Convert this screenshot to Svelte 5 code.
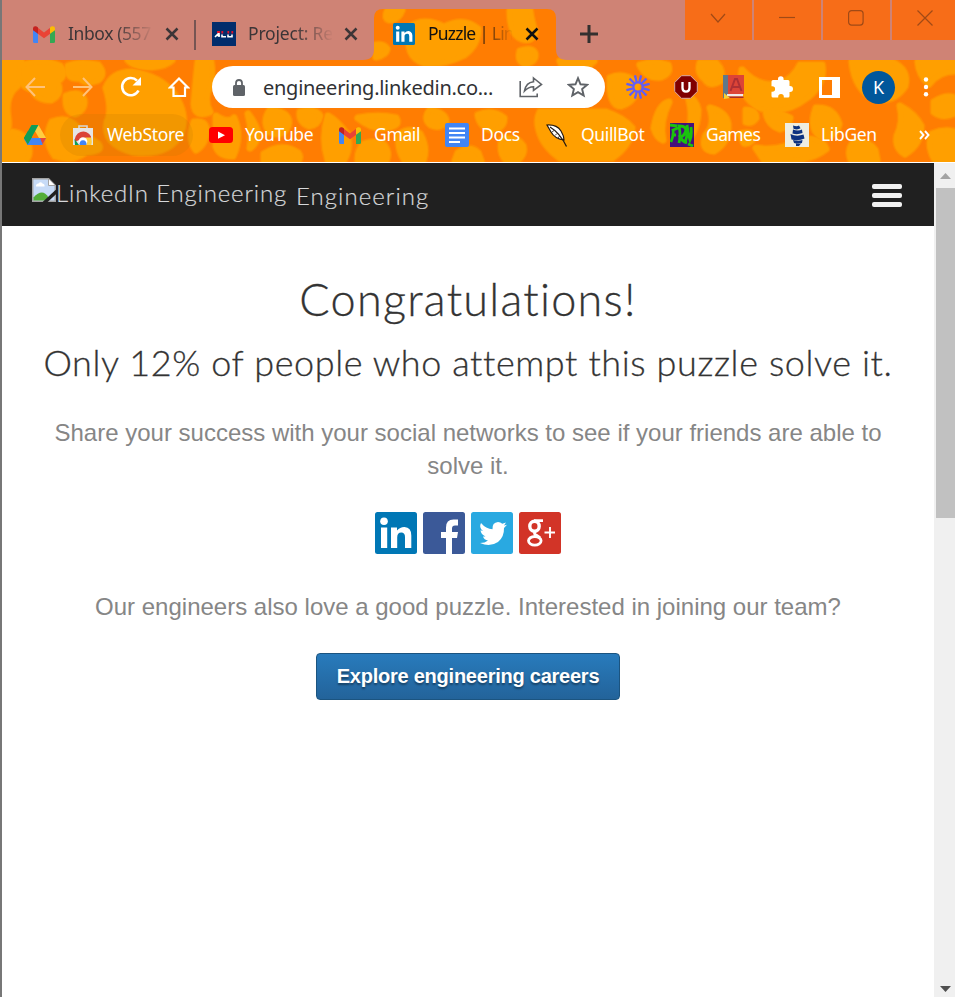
<script>
  const blobs = [
    'M2 62h20q4 18-9 28q-8 10-5 28q2 16-6 28z',
    'M20 66q22-8 40 0q8 8-3 16q6 12-6 18q-14 0-18-10q-18-6-13-24z',
    'M68 66q12-5 30-1q8 9 0 15q-12 5-18-2q-14 2-12-12z',
    'M66 96q14-6 18 4q1 10-9 14q-10-2-9-18z',
    'M52 122q14-6 24 4q12 12 22 18q6 7-12 8q-14 10-31 4q-12-16-3-34z',
    'M12 132q13 2 16 12q3 10-2 16h-22q-2-16 8-28z',
    'M106 88q6-16 26-16q28 4 42 22q14 20 7 38q-10 24-48 20q-30-8-26-30q6-12-1-34z',
    'M128 60h44q-6 6-20 7q-18 0-24-7z',
    'M198 62h13q2 14-1 24q-7 14 0 26q-15 6-16-8q2-24 4-42z',
    'M194 122q12-2 12 8q0 14-10 20q-8-10-2-28z',
    'M216 116q12 8 18 2q8 18-1 38q-14 0-17-10z',
    'M248 114q5 18 2 34q6-4 8-14q-2-10-10-20z',
    'M270 110q22 2 18 16q-6 12-18 6q-8-10 0-22z',
    'M300 112q16-4 20 4q-2 9-11 10q-10-4-9-14z',
    'M264 154q18-12 34-1q3 4 0 8h-34z',
    'M328 116q8 4 19 18q4 14-3 26h-16q-7-22 0-44z',
    'M358 118q20-4 38 0q4 7-6 9q-16 4-32-9z',
    'M364 144q12-4 20 1q6 8 2 16h-28q-1-10 6-17z',
    'M400 134q10-7 20 0q8 14 3 27h-18q-9-14-5-27z',
    'M410 27q14-10 34 0q20-10 34 2q0 16-14 26q-20 10-40 8q-20-6-14-36z',
    'M388 10h14q-3 8-10 10q-9 0-4-10z',
    'M510 11h20q1 9 5 21q-3 10-13 7q-12-4-12-28z',
    'M376 45q8-1 11 4q-1 6-11 8z',
    'M520 51q13-4 15 3q1 7-9 10q-9-2-6-13z',
    'M560 61h34q-10 10-22 10q-10-3-12-10z',
    'M430 110q16 3 16 12q-6 7-15 3q-8-6-1-15z',
    'M458 153q12-8 20 0l3 8h-26z',
    'M478 115q14-6 26 3q0 10-12 12q-12-3-14-15z',
    'M502 140q14-5 21 6q2 8-5 14h-12q-7-8-4-20z',
    'M540 112h66q18 6 26 16q-2 18-20 30h-52q-17-12-21-28q-3-10 1-18z',
    'M610 78q14-6 27 5q0 18-16 23q-12 0-11-28z',
    'M640 65q14-5 28 0q3 8-7 12q-14 2-21-12z',
    'M654 128q4-23 15-26q-10 20-6 38q-6-2-9-12z',
    'M688 96q7 22-2 46q12-13 12-32q-2-10-10-14z',
    'M700 63h16q8 8 4 18q-10 6-15-2q-8-6-5-16z',
    'M710 108q16 4 18 16q1 18-14 27q-14-1-8-16q10-10 4-27z',
    'M742 70q16 18 38 14q14-6 20-19h22q3 18-14 32q-26 20-50 10q-20-12-16-37z',
    'M746 110q10 0 10 8q-4 6-10 4z',
    'M766 112q14 0 24 6q-1 9-10 11q-12-4-14-17z',
    'M740 134q12-3 14 3q-3 7-10 6z',
    'M756 148q24 4 48-9q18-1 22 10q-14 11-36 11h-26z',
    'M852 62h40q17 8 13 24q-10 16-30 13q-20-9-23-37z',
    'M816 108q18-1 23 16q-3 12-16 14q-15-8-7-30z',
    'M900 106q15 8 21 20q0 18-16 28q-10-6-8-18q7-14 3-30z',
    'M918 62h37v9q-16 0-26 13q-10-9-11-22z',
    'M934 102q12-8 21-4v15q-12 6-21-1z',
    'M932 134q12-5 23-2v28h-20q-8-14-3-26z',
    'M854 142q14-2 21 8l2 10h-26q-4-10 3-18z'
  ];
  const rays = Array.from({ length: 12 }, (_, i) => i * 30 + 15);
</script>

{#snippet gmail()}
  <svg width="22" height="17" viewBox="0 0 22 17">
    <path fill="#4285f4" d="M0 3.5 5 7v10H1.500Q0 17 0 15.500z" />
    <path fill="#34a853" d="M22 3.500 17 7v10h3.500q1.500 0 1.500-1.500z" />
    <path fill="#ea4335" d="M4.500 1.500 11 6.500l6.500-5V7.500L11 12.300 4.500 7.500z" />
    <path fill="#c5221f" d="M0 2.500Q0 .3 2.200.2 3.500 0 5 1.500V7.700L0 4.300z" />
    <path fill="#fbbc04" d="M22 2.500Q22 .3 19.800.2 18.500 0 17 1.500V7.700l5-3.400z" />
  </svg>
{/snippet}

{#snippet cross()}
  <svg width="14" height="14" viewBox="0 0 14 14"><path d="M1.500 1.500l11 11m0-11l-11 11" stroke="currentColor" stroke-width="2.500" /></svg>
{/snippet}

<div class="window">
  <header class="chrome">
    <svg class="backdrop" width="953" height="162" viewBox="2 0 953 162">
      <rect x="2" width="953" height="162" fill="#ff7d02" />
      <g stroke-linejoin="round">
        {#each blobs as d}<path {d} fill="#ff9f00" stroke="#ff8a00" stroke-width="9" />{/each}
        {#each blobs as d}<path {d} fill="#ff9f00" stroke="#ff9900" stroke-width="6.500" />{/each}
        {#each blobs as d}<path {d} fill="#ff9f00" stroke="#ff9f00" stroke-width="4.500" />{/each}
      </g>
      <path fill="#cf8375" d="M2 0H955V60H567Q556 60 556 49V18Q556 9 547 9H383Q374 9 374 18V49Q374 60 363 60H2z" />
    </svg>

    <div class="tabs">
      <div class="tab first">
        {@render gmail()}<span class="label">Inbox (557</span>{@render cross()}
      </div>
      <div class="tab second">
        <svg width="24" height="24" viewBox="0 0 24 24">
          <rect width="24" height="24" fill="#012d6c" />
          <path d="M3 15l4-4v4M4 13.500h4M10 12.500v2.200h4M16 12.500v2.200h4v-2.200" fill="none" stroke="#fff" stroke-width="1.600" />
          <path d="M5 10h3M10.300 9v2.500M16.300 9v2.500M20.300 9v2.500" stroke="#e0122c" stroke-width="1.800" />
        </svg>
        <span class="label">Project: Re</span>{@render cross()}
      </div>
      <div class="tab active">
        <svg width="22" height="22" viewBox="0 0 42 42">
          <rect width="42" height="42" rx="3" fill="#0077b5" />
          <path fill="#fff" d="M6 16h6v20H6zM16 16h6v3q6-6 12-2 3 2 3 7v12h-6V25q0-5-4-4.500-5 0-5 5.500v10h-6z" />
          <circle cx="9" cy="9" r="3.800" fill="#fff" />
        </svg>
        <span class="label">Puzzle | Lin</span>{@render cross()}
      </div>
      <svg class="plus" width="18" height="18" viewBox="0 0 18 18"><path d="M9 0v18M0 9h18" stroke="#33302f" stroke-width="3" /></svg>
      <div class="controls">
        <span><svg width="16" height="16" viewBox="0 0 16 16"><path d="M1 4l7 8 7-8" /></svg></span>
        <span><svg width="16" height="16" viewBox="0 0 16 16"><path d="M0 7.500h16" /></svg></span>
        <span><svg width="16" height="16" viewBox="0 0 16 16"><rect x=".6" y=".6" width="14.500" height="14.500" rx="3" /></svg></span>
        <span><svg width="16" height="16" viewBox="0 0 16 16"><path d="M.5 .5l15 15m0-15l-15 15" /></svg></span>
      </div>
    </div>

    <div class="toolbar">
      <svg class="faded" width="20" height="20" viewBox="0 0 20 20"><path d="M20 10H1.500M10 1L1.500 10l8.500 9" /></svg>
      <svg class="faded forward" width="20" height="20" viewBox="0 0 20 20"><path d="M0 10h18.500M10 1l8.500 9-8.500 9" /></svg>
      <svg class="reload" width="22" height="22" viewBox="0 0 22 22">
        <path d="M18.500 14.500A8.600 8.600 0 1 1 17 4.700" fill="none" stroke="#fff" stroke-width="2.600" />
        <path d="M21 1v8.500h-8.500z" fill="#fff" />
      </svg>
      <svg class="home" width="22" height="22" viewBox="0 0 22 22"><path d="M2 11.500L11 2.500l9 9h-3v8.500H5.500v-8.500z" fill="none" stroke="#fff" stroke-width="2.200" /></svg>
      <div class="omnibox">
        <svg width="12" height="17" viewBox="0 0 12 17"><path d="M3 7V4q0-3 3-3t3 3v3" fill="none" stroke="#5f6368" stroke-width="1.800" /><rect y="6" width="12" height="11" rx="1.500" fill="#5f6368" /></svg>
        <span class="url">engineering.linkedin.co...</span>
        <svg class="share" width="24" height="22" viewBox="0 0 24 22" fill="none" stroke="#5f6368" stroke-width="1.600">
          <path d="M1.200 5v15.500h17v-3M14.500 2l8 6.500-8 6v-3.800q-5 0-9 4.300Q7 6.500 14.500 5.800z" />
        </svg>
        <svg class="star" width="22" height="22" viewBox="0 0 22 22"><path d="M11 2.200l2.500 6.100 6.600.5-5 4.300 1.600 6.500L11 16.100l-5.700 3.500 1.600-6.500-5-4.300 6.600-.5z" fill="none" stroke="#5f6368" stroke-width="1.900" /></svg>
      </div>
      <svg class="loom" width="24" height="24" viewBox="0 0 24 24">
        <g stroke="#625df5" stroke-width="2.300">{#each rays as a}<path d="M12 7V0" transform="rotate({a} 12 12)" />{/each}</g>
        <circle cx="12" cy="12" r="4.600" fill="none" stroke="#625df5" stroke-width="2.200" />
      </svg>
      <svg class="ublock" width="24" height="24" viewBox="0 0 24 24">
        <path d="M7.500 .7h9l6.800 6.800v9l-6.800 6.800h-9L.7 16.500v-9z" fill="#800000" stroke="#d9a9a0" stroke-width="1" />
        <path d="M8.500 7v6q0 3.600 3.500 3.600t3.500-3.600V7" fill="none" stroke="#fff" stroke-width="2.300" />
      </svg>
      <svg class="dictionary" width="21" height="24" viewBox="0 0 21 24">
        <path d="M0 0h5v23H0z" fill="#61788a" /><path d="M5 0h16v19H5z" fill="#dc4437" /><path d="M4 19h16v2.500H4z" fill="#f1e9e9" /><path d="M4 21.500h16.500V23H4z" fill="#a92b28" />
        <path d="M7.500 16l4.500-12h2l4.500 12M9 12h8" fill="none" stroke="#ae3034" stroke-width="2" /><path d="M1 18l6 5-6 1z" fill="#f8cf35" />
      </svg>
      <svg class="puzzle" width="22" height="22" viewBox="0 0 22 22">
        <path fill="#fff" d="M2 4h5V3a2.800 2.800 0 0 1 5.600 0v1H17q1.500 0 1.500 1.500V10h.5a3 3 0 0 1 0 6h-.5v4q0 1.500-1.500 1.500h-4.200v-.8a2.800 2.800 0 0 0-5.600 0v.8H2Q.5 21.500.5 20v-4.200h.8a2.800 2.800 0 0 0 0-5.600H.5V5.500Q.5 4 2 4z" />
      </svg>
      <svg class="panel" width="21" height="21" viewBox="0 0 21 21"><path fill="#fff" fill-rule="evenodd" d="M0 0h21v21H0zM3 3v15h10V3z" /></svg>
      <span class="avatar">K</span>
      <svg class="dots" width="6" height="20" viewBox="0 0 6 20" fill="#fff"><circle cx="3" cy="2.500" r="2.200" /><circle cx="3" cy="10" r="2.200" /><circle cx="3" cy="17.300" r="2.200" /></svg>
    </div>

    <nav class="bookmarks">
      <svg class="drive" width="22" height="20" viewBox="0 0 22 20">
        <path fill="#ffcd40" d="M7.500 0h7L22 13h-7z" /><path fill="#0f9d58" d="M7.500 0h7L4 19 0 13z" /><path fill="#4285f4" d="M4.500 13H22l-4 7H3.500L0 14z" /><path fill="#ea4335" d="M15.500 13H22l-3.500 6z" /><path fill="#0f9d58" d="M0 13l4-7 4 7-4 7z" /><path fill="#4285f4" d="M7.500 13H16l2.500 7H3.500z" />
      </svg>
      <span class="bookmark webstore">
        <svg width="20" height="20" viewBox="0 0 20 20">
          <path d="M6 4V1h8v3" fill="none" stroke="#d8d8d8" stroke-width="1.600" /><path fill="#e5e5e5" d="M0 3h20v17H0z" />
          <path fill="#db4437" d="M2 17a8.500 8.500 0 0 1 16-5.500V13H10z" /><path fill="#0f9d58" d="M1.500 14l4.500 6H2z" /><path fill="#ffcd40" d="M12 12.500h6.300q1 5 0 7.500h-6.300z" /><circle cx="10" cy="16.500" r="4.300" fill="#fff" /><path d="M6.700 20a3.500 3.500 0 1 1 6.600 0z" fill="#4285f4" />
        </svg>
        <span>WebStore</span>
      </span>
      <span class="bookmark youtube">
        <svg width="24" height="16" viewBox="0 0 24 16"><rect width="24" height="16" rx="3.500" fill="#f00" /><path d="M9 4.500l7 3.700-7 3.600z" fill="#fff" /></svg>
        <span>YouTube</span>
      </span>
      <span class="bookmark mail">{@render gmail()} <span>Gmail</span></span>
      <span class="bookmark docs">
        <svg width="24" height="24" viewBox="0 0 24 24"><rect width="24" height="24" rx="2" fill="#4285f4" /><path d="M4 5.500h16M4 10h16M4 14.500h16M4 19h11" stroke="#fff" stroke-width="2" /></svg>
        <span>Docs</span>
      </span>
      <span class="bookmark quill">
        <svg width="22" height="23" viewBox="0 0 22 23">
          <path d="M1 1q10-.5 14 6 3 5 3 9Q9 15 5 8z" fill="#fff" stroke="#241a12" stroke-width="1.200" />
          <path d="M4 3q10 6 16.500 19.500" fill="none" stroke="#241a12" stroke-width="1.300" />
          <path d="M6 8l2-1.500M9 11.500l2-2M12 14l1.500-2" fill="none" stroke="#241a12" stroke-width=".8" />
        </svg>
        <span>QuillBot</span>
      </span>
      <span class="bookmark games">
        <svg width="24" height="24" viewBox="0 0 24 24">
          <rect width="24" height="24" fill="#45107c" /><path fill="none" stroke="#19c40d" stroke-width="2.800" d="M1 19q3-8 2-12l5-2M2 12h4M9 20q2-8 0-17 9 0 6 7-2 4-5 4 2 4 7 6M15 20q3-8 2-18 1 8 3 15 2-5 1-13M0 2l7 1M18 21l5 2" />
        </svg>
        <span>Games</span>
      </span>
      <span class="bookmark libgen">
        <svg width="24" height="24" viewBox="0 0 24 24">
          <rect width="24" height="24" fill="#eeede0" /><path fill="#0d3380" d="M8 2.500q4 1.500 6 0l1.500 2.800q-3 2-7 .5zM8 6.500q5 2 9 0l.5 3.500q-5 2-10 .5zM5.500 11q6 3 13 .5l1 4q-6 3-13 1zM8 17q5 1.500 9.500 0l-.5 3q-4 1.500-8 0zM11 20.500q3 1 5 0l-2 2.500h-3z" />
        </svg>
        <span>LibGen</span>
      </span>
      <svg class="more" width="11" height="10" viewBox="0 0 11 10"><path d="M1 1l3.500 4L1 9M6 1l3.500 4L6 9" fill="none" stroke="#fff" stroke-width="1.900" /></svg>
    </nav>
  </header>

  <div class="viewport">
    <div class="page">
      <div class="site">
        <svg class="broken" width="24" height="24" viewBox="0 0 24 24">
          <path fill="#c7dbf7" stroke="#a3a3a3" stroke-width="1.500" d="M.7 .7h15.800l6.800 6.800v15.800H.7z" />
          <path fill="#fff" d="M4 8q0-2.500 2.500-2.500 2-2.500 4 0Q13 6 12.500 8.500H4zM16.500 1v6.500H23z" />
          <path fill="#53ad38" d="M1.500 22.500v-3q9-10 15 0v3z" /><path stroke="#202020" stroke-width="3.500" d="M12 25L25 13" />
          <path fill="none" stroke="#a3a3a3" d="M16.500 1v6.500H23" />
        </svg>
        <span class="alt">LinkedIn Engineering</span>
        <span class="name">Engineering</span>
        <span class="menu"><i></i><i></i><i></i></span>
      </div>
      <main>
        <h1>Congratulations!</h1>
        <h2>Only 12% of people who attempt this puzzle solve it.</h2>
        <p>Share your success with your social networks to see if your friends are able to<br />solve it.</p>
        <div class="social">
          <svg viewBox="0 0 42 42">
            <rect width="42" height="42" rx="2.500" fill="#0077b5" />
            <path fill="#fff" d="M6 15.500h6.200V36H6zM16 15.500h6v3q3-3.600 7.500-3.500 6.800.3 6.800 8.500V36H30V25q0-4.600-3.700-4.600-4.100 0-4.100 5V36H16z" />
            <circle cx="9" cy="9.300" r="3.800" fill="#fff" />
          </svg>
          <svg viewBox="0 0 42 42">
            <rect width="42" height="42" rx="2.500" fill="#3b5998" />
            <path fill="#fff" d="M23 42V26h-5v-6h5v-4.500Q23 7.500 30.500 7.500H35v6h-3q-3 0-3 3V20h6l-1 6h-5v16z" />
          </svg>
          <svg viewBox="0 0 42 42">
            <rect width="42" height="42" rx="2.500" fill="#29a9e1" />
            <path fill="#fff" d="M10 11q5 6 11.500 6.300Q21 10.500 27 10q2.500 0 4.300 1.700L35 10.500l-2 3 3-.7-3 3.200q.3 9-6 14-8 5.500-18 1 5 0 8-2.500-4-.5-5-4h2.500Q10 22.500 9.500 18.300l2.500.7Q7.500 15.500 10 11z" />
          </svg>
          <svg viewBox="0 0 42 42">
            <rect width="42" height="42" rx="2.500" fill="#d23427" />
            <g fill="none" stroke="#fff"><ellipse cx="15.500" cy="14.300" rx="4.700" ry="5" stroke-width="3.400" /><ellipse cx="15.800" cy="28.800" rx="6.300" ry="4.300" stroke-width="2.800" />
            <path d="M15 8.600h9M16.500 19.500q-2.500 2.300 1 3.700l3.500 2.500" stroke-width="2.800" /><path d="M31 15v11M25.500 20.500h10.500" stroke-width="1.900" /></g>
          </svg>
        </div>
        <p>Our engineers also love a good puzzle. Interested in joining our team?</p>
        <button>Explore engineering careers</button>
      </main>
    </div>
    <div class="scrollbar">
      <svg width="11" height="6" viewBox="0 0 11 6"><path d="M5.500 0L11 6H0z" fill="#a3a3a3" /></svg>
      <div class="thumb"></div>
      <svg class="down" width="11" height="6" viewBox="0 0 11 6"><path d="M0 0h11L5.500 6z" fill="#505050" /></svg>
    </div>
  </div>
</div>

<style>
  svg { display: block; flex: none; }
  .window { box-sizing: border-box; width: 955px; height: 997px; border-left: 2px solid #777; background: #fff; font-family: "Noto Sans", "Open Sans", sans-serif; overflow: hidden; display: flex; flex-direction: column; }
  .chrome { position: relative; height: 162px; flex: none; }
  .backdrop { position: absolute; inset: 0; }
  .tabs { position: relative; display: flex; height: 60px; }
  .tab { display: flex; align-items: center; height: 68px; box-sizing: border-box; font-size: 17.500px; color: #3c3537; }
  .tab .label { height: 26px; line-height: 25px; white-space: nowrap; width: 84px; -webkit-mask-image: linear-gradient(90deg, #000 55%, transparent 102%); mask-image: linear-gradient(90deg, #000 55%, transparent 102%); }
  .first { padding-left: 31px; width: 192px; }
  .first .label { margin: 0 13px 0 13px; letter-spacing: -.4px; }
  .second { width: 180px; padding-left: 18px; position: relative; }
  .second::before { content: ""; position: absolute; left: 0; top: 20px; width: 2px; height: 30px; background: #765553; }
  .second .label { margin: 0 12px; letter-spacing: -.2px; }
  .active { width: 182px; padding-left: 19px; color: #111; }
  .active .label { margin: 0 13px 0 13px; letter-spacing: -.8px; }
  .plus { margin: 25px 0 0 24px; }
  .controls { display: flex; gap: 2px; margin-left: auto; height: 40px; }
  .controls span { width: 67px; display: flex; justify-content: center; padding: 10px 2px 0 0; box-sizing: border-box; background: #f76d18; }
  .controls span:last-child { width: 63px; padding: 10px 0 0 3px; }
  .controls svg { fill: none; stroke: #a04a16; stroke-width: 1.200; }
  .toolbar { position: relative; display: flex; align-items: center; height: 54px; }
  .faded { margin-left: 23px; fill: none; stroke: #ffc27a; stroke-width: 2; }
  .forward { margin-left: 28px; }
  .reload { margin-left: 27px; }
  .home { margin-left: 26px; }
  .omnibox { display: flex; align-items: center; width: 393px; height: 42px; margin-left: 22px; padding-left: 21px; box-sizing: border-box; border-radius: 21px; background: #fff; }
  .url { width: 238px; margin-left: 18px; font-size: 20px; letter-spacing: -.27px; color: #303134; white-space: nowrap; }
  .share { margin-left: 18px; }
  .star { margin-left: 24px; }
  .loom { margin-left: 21px; }
  .ublock { margin-left: 24px; }
  .dictionary { margin-left: 25px; }
  .puzzle { margin-left: 27px; }
  .panel { margin-left: 26px; }
  .avatar { width: 33px; height: 33px; margin-left: 22px; border-radius: 50%; background: #01579b; color: #fff; font-size: 18px; line-height: 32px; text-align: center; }
  .dots { margin-left: 28px; }
  .bookmarks { position: relative; display: flex; align-items: center; height: 42px; }
  .drive { margin-left: 22px; }
  .bookmark { display: flex; align-items: center; box-sizing: border-box; height: 42px; gap: 12px; color: #fff; font-size: 17.500px; letter-spacing: -.35px; white-space: nowrap; }
  .bookmark span { padding-bottom: 2px; }
  .webstore { width: 133px; margin-left: 14px; padding-left: 13px; gap: 14px; border-radius: 21px; background: rgb(190 120 0 / .2); }
  .youtube { width: 130px; padding-left: 16px; }
  .mail { width: 106px; padding-left: 16px; gap: 13px; }
  .docs { width: 101px; padding-left: 16px; }
  .quill { width: 124px; padding-left: 16px; gap: 13px; }
  .games { width: 115px; padding-left: 16px; letter-spacing: -.6px; }
  .libgen { width: 134px; padding-left: 16px; }
  .more { margin-left: 16px; }
  .viewport { display: flex; flex: 1; border-top: 1px solid #fff; }
  .page { width: 932px; }
  .site { display: flex; height: 63px; padding-left: 30px; box-sizing: border-box; background: #202020; color: #d6d8da; font: 300 24px/30px Lato, sans-serif; -webkit-text-stroke: .2px #d6d8da; }
  .broken { margin-top: 15px; }
  .alt { width: 230px; margin: 15px 0 0 0; letter-spacing: .83px; white-space: nowrap; }
  .name { margin: 18px 0 0 10px; letter-spacing: 1.050px; }
  .menu { width: 30px; margin: 21px 32px 0 auto; display: flex; flex-direction: column; gap: 4px; }
  .menu i { height: 5px; border-radius: 2px; background: #f2f2f2; }
  main { display: flex; flex-direction: column; align-items: center; }
  h1, h2 { margin: 0; color: #333; font-family: Lato, sans-serif; font-weight: 300; white-space: nowrap; -webkit-text-stroke: .3px #333; }
  h1 { margin-top: 43px; font-size: 45px; line-height: 60px; letter-spacing: 1.250px; }
  h2 { margin-top: 9px; font-size: 36px; line-height: 48px; letter-spacing: .6px; }
  p { margin: 30px 0 0; color: #868686; font: 24px/33px "Liberation Sans", Arial, sans-serif; text-align: center; white-space: nowrap; }
  .social { display: flex; gap: 6px; margin-top: 30px; }
  .social svg { width: 42px; height: 42px; }
  .social + p { margin-top: 36px; }
  button { width: 304px; height: 47px; margin-top: 30px; padding: 0; border: 1px solid #1b5480; border-radius: 4px; background: linear-gradient(#287bbc, #23639a); color: #fff; font: bold 20px/43px "Liberation Sans", Arial, sans-serif; letter-spacing: -.24px; text-shadow: 0 2px 2px rgb(0 0 0 / .4); white-space: nowrap; }
  .scrollbar { display: flex; flex-direction: column; align-items: center; width: 21px; padding-left: 2px; box-sizing: border-box; background: #f0f0f0; }
  .scrollbar svg { margin-top: 10px; }
  .thumb { align-self: stretch; height: 330px; margin-top: 9px; background: #c1c1c1; }
  .scrollbar .down { margin: auto 0 5px; }
</style>
